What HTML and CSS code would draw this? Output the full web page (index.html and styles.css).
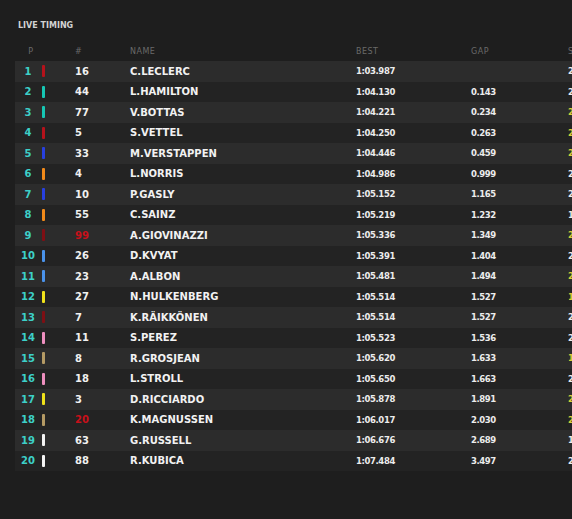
FILE: index.html
```html
<!DOCTYPE html>
<html>
<head>
<meta charset="utf-8">
<link rel="stylesheet" href="styles.css">
</head>
<body>
<div class="panel">
  <div class="title">LIVE TIMING</div>
  <div class="table">
    <div class="row head">
      <div class="c-pos">P</div><div class="c-bar"></div><div class="c-num">#</div><div class="c-name">NAME</div><div class="c-best">BEST</div><div class="c-gap">GAP</div><div class="c-sec">S1</div>
    </div>
    <div class="row"><div class="c-pos">1</div><div class="c-bar"><span class="bar ferrari"></span></div><div class="c-num">16</div><div class="c-name">C.LECLERC</div><div class="c-best">1:03.987</div><div class="c-gap"></div><div class="c-sec">20.8</div></div>
    <div class="row"><div class="c-pos">2</div><div class="c-bar"><span class="bar merc"></span></div><div class="c-num">44</div><div class="c-name">L.HAMILTON</div><div class="c-best">1:04.130</div><div class="c-gap">0.143</div><div class="c-sec">20.8</div></div>
    <div class="row"><div class="c-pos">3</div><div class="c-bar"><span class="bar merc"></span></div><div class="c-num">77</div><div class="c-name">V.BOTTAS</div><div class="c-best">1:04.221</div><div class="c-gap">0.234</div><div class="c-sec yel">20.8</div></div>
    <div class="row"><div class="c-pos">4</div><div class="c-bar"><span class="bar ferrari"></span></div><div class="c-num">5</div><div class="c-name">S.VETTEL</div><div class="c-best">1:04.250</div><div class="c-gap">0.263</div><div class="c-sec yel">20.8</div></div>
    <div class="row"><div class="c-pos">5</div><div class="c-bar"><span class="bar redbull"></span></div><div class="c-num">33</div><div class="c-name">M.VERSTAPPEN</div><div class="c-best">1:04.446</div><div class="c-gap">0.459</div><div class="c-sec yel">20.8</div></div>
    <div class="row"><div class="c-pos">6</div><div class="c-bar"><span class="bar mclaren"></span></div><div class="c-num">4</div><div class="c-name">L.NORRIS</div><div class="c-best">1:04.986</div><div class="c-gap">0.999</div><div class="c-sec">20.8</div></div>
    <div class="row"><div class="c-pos">7</div><div class="c-bar"><span class="bar redbull"></span></div><div class="c-num">10</div><div class="c-name">P.GASLY</div><div class="c-best">1:05.152</div><div class="c-gap">1.165</div><div class="c-sec">20.8</div></div>
    <div class="row"><div class="c-pos">8</div><div class="c-bar"><span class="bar mclaren"></span></div><div class="c-num">55</div><div class="c-name">C.SAINZ</div><div class="c-best">1:05.219</div><div class="c-gap">1.232</div><div class="c-sec">19.9</div></div>
    <div class="row"><div class="c-pos">9</div><div class="c-bar"><span class="bar alfa"></span></div><div class="c-num red">99</div><div class="c-name">A.GIOVINAZZI</div><div class="c-best">1:05.336</div><div class="c-gap">1.349</div><div class="c-sec yel">20.8</div></div>
    <div class="row"><div class="c-pos">10</div><div class="c-bar"><span class="bar toro"></span></div><div class="c-num">26</div><div class="c-name">D.KVYAT</div><div class="c-best">1:05.391</div><div class="c-gap">1.404</div><div class="c-sec">20.8</div></div>
    <div class="row"><div class="c-pos">11</div><div class="c-bar"><span class="bar toro"></span></div><div class="c-num">23</div><div class="c-name">A.ALBON</div><div class="c-best">1:05.481</div><div class="c-gap">1.494</div><div class="c-sec yel">20.8</div></div>
    <div class="row"><div class="c-pos">12</div><div class="c-bar"><span class="bar renault"></span></div><div class="c-num">27</div><div class="c-name">N.HULKENBERG</div><div class="c-best">1:05.514</div><div class="c-gap">1.527</div><div class="c-sec yel">19.9</div></div>
    <div class="row"><div class="c-pos">13</div><div class="c-bar"><span class="bar alfa"></span></div><div class="c-num">7</div><div class="c-name">K.RÄIKKÖNEN</div><div class="c-best">1:05.514</div><div class="c-gap">1.527</div><div class="c-sec">20.8</div></div>
    <div class="row"><div class="c-pos">14</div><div class="c-bar"><span class="bar racing"></span></div><div class="c-num">11</div><div class="c-name">S.PEREZ</div><div class="c-best">1:05.523</div><div class="c-gap">1.536</div><div class="c-sec">20.8</div></div>
    <div class="row"><div class="c-pos">15</div><div class="c-bar"><span class="bar haas"></span></div><div class="c-num">8</div><div class="c-name">R.GROSJEAN</div><div class="c-best">1:05.620</div><div class="c-gap">1.633</div><div class="c-sec yel">19.9</div></div>
    <div class="row"><div class="c-pos">16</div><div class="c-bar"><span class="bar racing"></span></div><div class="c-num">18</div><div class="c-name">L.STROLL</div><div class="c-best">1:05.650</div><div class="c-gap">1.663</div><div class="c-sec">20.8</div></div>
    <div class="row"><div class="c-pos">17</div><div class="c-bar"><span class="bar renault"></span></div><div class="c-num">3</div><div class="c-name">D.RICCIARDO</div><div class="c-best">1:05.878</div><div class="c-gap">1.891</div><div class="c-sec yel">20.8</div></div>
    <div class="row"><div class="c-pos">18</div><div class="c-bar"><span class="bar haas"></span></div><div class="c-num red">20</div><div class="c-name">K.MAGNUSSEN</div><div class="c-best">1:06.017</div><div class="c-gap">2.030</div><div class="c-sec yel">20.8</div></div>
    <div class="row"><div class="c-pos">19</div><div class="c-bar"><span class="bar williams"></span></div><div class="c-num">63</div><div class="c-name">G.RUSSELL</div><div class="c-best">1:06.676</div><div class="c-gap">2.689</div><div class="c-sec">19.9</div></div>
    <div class="row"><div class="c-pos">20</div><div class="c-bar"><span class="bar williams"></span></div><div class="c-num">88</div><div class="c-name">R.KUBICA</div><div class="c-best">1:07.484</div><div class="c-gap">3.497</div><div class="c-sec">20.8</div></div>
  </div>
</div>
</body>
</html>
```

FILE: styles.css
```css
html, body {
  margin: 0;
  padding: 0;
  background: #1e1e1e;
  overflow: hidden;
  width: 572px;
  height: 519px;
}

.panel {
  padding: 19px 0 0 15px;
  font-family: "DejaVu Sans", sans-serif;
  color: #eeeeee;
}

.title {
  margin-left: 3px;
  font-size: 8px;
  font-weight: bold;
  line-height: 14px;
  color: #d2d2d2;
  height: 14px;
}

.table {
  margin-top: 8px;
  width: 620px;
}

.row {
  display: grid;
  grid-template-columns: 26px 34px 55px 226px 115px 97px 60px;
  align-items: center;
  height: 20.5px;
  font-size: 10px;
  font-weight: bold;
  white-space: nowrap;
}

.row:nth-child(even) { background: #2c2c2c; }
.row:nth-child(odd) { background: #232323; }

.row.head {
  height: 20px;
  background: transparent;
  font-size: 8px;
  font-weight: normal;
  letter-spacing: 0.5px;
  color: #6a6a6a;
}

.c-pos {
  text-align: center;
  color: #3dd0c8;
}
.head .c-pos { color: #6a6a6a; padding-left: 6px; }

.c-bar {
  display: flex;
  align-items: center;
  height: 100%;
}

.bar {
  display: block;
  width: 3px;
  height: 12px;
  margin-left: 1px;
  border-radius: 1px;
}

.ferrari { background: #b5121b; }
.merc { background: #16c7b4; }
.redbull { background: #2740e0; }
.mclaren { background: #f28a1a; }
.alfa { background: #7e0f14; }
.toro { background: #4a92ea; }
.renault { background: #f0e21a; }
.racing { background: #ee8fbf; }
.haas { background: #b49a64; }
.williams { background: #f4f4f4; }

.c-num { color: #f0f0f0; }
.head .c-num { color: #6a6a6a; }
.c-num.red { color: #c8101a; }

.c-name { color: #f2f2f2; }
.head .c-name, .head .c-best, .head .c-gap, .head .c-sec { color: #6a6a6a; }

.c-best, .c-gap, .c-sec {
  font-size: 8.5px;
  letter-spacing: -0.4px;
  color: #ececec;
}

.head .c-best, .head .c-gap, .head .c-sec {
  font-size: 8px;
  letter-spacing: 0.5px;
}

.c-sec.yel { color: #d6d03a; }
```
